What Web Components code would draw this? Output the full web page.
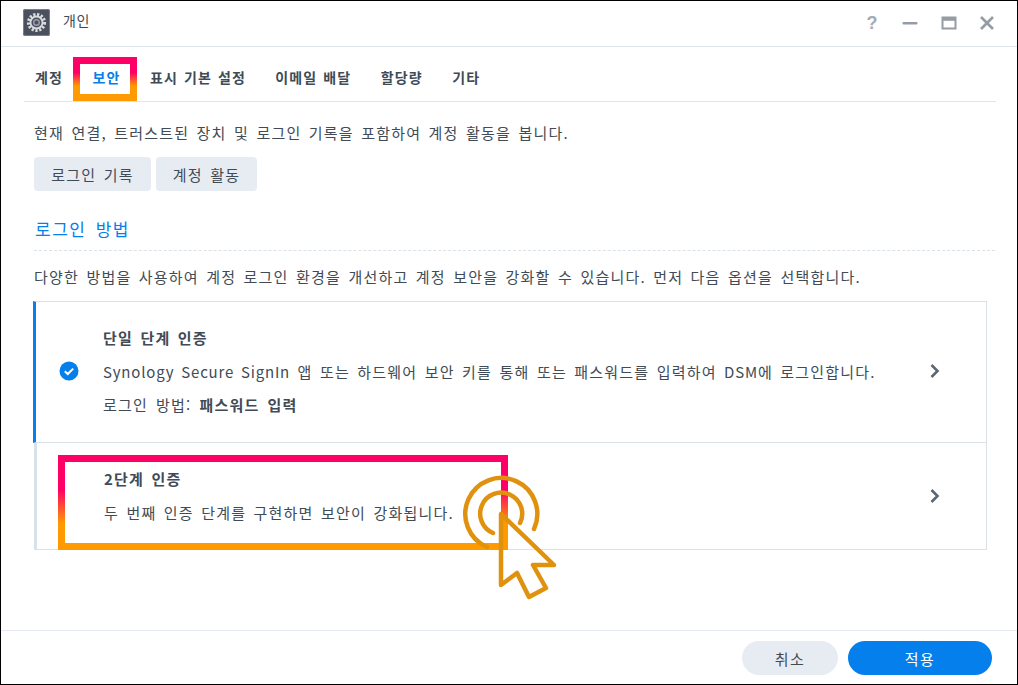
<!DOCTYPE html>
<html lang="ko"><head><meta charset="utf-8">
<style>
html,body{margin:0;padding:0;height:100%;background:#fff}
body{font-family:"Noto Sans CJK KR","Noto Sans",sans-serif;color:#414b55;font-size:15px}
</style></head><body>
<dsm-window>
  <dsm-titlebar slot="title">개인</dsm-titlebar>
  <dsm-tabs slot="tabs"></dsm-tabs>
  <dsm-security></dsm-security>
  <dsm-footer slot="footer"></dsm-footer>
</dsm-window>
<script>
function def(name, html){
  customElements.define(name, class extends HTMLElement{
    constructor(){super();this.attachShadow({mode:'open'}).innerHTML=html;}
  });
}
def('dsm-window',`<style>
:host{display:flex;flex-direction:column;box-sizing:border-box;width:1018px;height:685px;border:1px solid #000;background:#fff;position:relative;overflow:hidden}
.main{flex:1;min-height:0;display:flex;flex-direction:column}
</style><slot name="title"></slot><slot name="tabs"></slot><div class="main"><slot></slot></div><slot name="footer"></slot>`);

def('dsm-titlebar',`<style>
:host{display:flex;align-items:center;height:45px;border-bottom:1px solid #dfe5ec;padding:0 22px;box-sizing:content-box;flex:none}
.ic{width:27px;height:27px;margin-right:13px;flex:none;display:block;position:relative;top:-1px}
.t{font-size:14px;color:#414b55;flex:1;letter-spacing:.6px;position:relative;top:-4px}
.tools{display:flex;align-items:center;gap:18px;position:relative;top:-1px;right:-2px}
svg.b{width:20px;height:20px;display:block}
</style>
<svg class="ic" viewBox="0 0 27 27"><rect width="27" height="27" rx="2" fill="#4a505e"/><rect x=".5" y=".5" width="26" height="26" rx="2" fill="none" stroke="#7a7f8a"/>
<g fill="none" stroke="#d8dade"><circle cx="13.5" cy="13.5" r="8" stroke-width="3.2" stroke-dasharray="2.2 1.6"/><circle cx="13.5" cy="13.5" r="6" stroke-width="1.8"/><circle cx="13.5" cy="13.5" r="2.8" stroke-width="1.4" stroke="#9a9ea8"/></g></svg>
<span class="t"><slot></slot></span>
<div class="tools">
<span style="font:700 18px 'Liberation Sans',sans-serif;color:#a4aab1;width:16px;text-align:center;line-height:20px">?</span>
<svg class="b" viewBox="0 0 20 20" style="margin-left:2px"><rect x="2.500" y="9" width="15" height="2.600" rx="1" fill="#969ca4"/></svg>
<svg class="b" viewBox="0 0 20 20" style="margin-left:1px"><path d="M3.500 4.500h13v11h-13z" fill="none" stroke="#969ca4" stroke-width="2"/><rect x="3" y="4" width="14" height="3.800" fill="#969ca4"/></svg>
<svg class="b" viewBox="0 0 20 20"><path d="M4 4l12 12M16 4L4 16" fill="none" stroke="#969ca4" stroke-width="2.700"/></svg>
</div>`);

def('dsm-tabs',`<style>
:host{display:flex;gap:29.500px;margin:0 21px 0 23px;padding-left:11px;height:54px;border-bottom:1px solid #dfe5ec;align-items:center;flex:none;font-size:14px;font-weight:700;letter-spacing:1.100px;word-spacing:1px;color:#414b55;position:relative}
span{white-space:nowrap;position:relative;top:3px}
.on{color:#057feb}
</style>
<span>계정</span><span class="on">보안</span><span>표시 기본 설정</span><span>이메일 배달</span><span>할당량</span><span>기타</span>`);

def('dsm-button',`<style>
:host{display:inline-flex;align-items:center;justify-content:center;height:34px;background:#e7ecf3;border-radius:4px;font-size:15px;color:#414b55;letter-spacing:1.200px;word-spacing:2px;box-sizing:border-box;white-space:nowrap}
:host([pill]){border-radius:17px;letter-spacing:1.500px;padding-top:1px}
:host([primary]){background:#057feb;color:#fff}
</style><slot></slot>`);

def('dsm-card',`<style>
:host{display:flex;align-items:center;box-sizing:border-box;border:1px solid #d9e1e9;border-left:3px solid #d9e1e9;background:#fff;position:relative}
:host([active]){border-left-color:#057feb}
.c{flex:1;min-width:0;padding-left:var(--pad,67px)}
.chev{position:absolute;right:43px;top:50%;margin-top:var(--chev,-9px);width:16px;height:16px}
</style>
<slot name="check"></slot>
<div class="c"><slot></slot></div>
<svg class="chev" viewBox="0 0 16 16"><path d="M4.500 2l6 6-6 6" fill="none" stroke="#5d6772" stroke-width="2.600"/></svg>`);

def('dsm-hilite',`<style>
:host{display:block;position:absolute;box-sizing:border-box;border:7px solid;border-image:linear-gradient(#ff0066 0%,#ff0066 var(--a,35%),#ff9a00 var(--b,75%),#ff9a00 100%) 1;pointer-events:none;background:transparent}
</style>`);

def('dsm-security',`<style>
:host{display:block;padding:0 30px 0 33px;flex:1;font-size:15px;letter-spacing:1.200px;word-spacing:2px;color:#414b55}
p{margin:0;line-height:20px;white-space:nowrap}
.d1{padding-top:21px}
.btns{display:flex;gap:5px;margin-top:14px}
h2{margin:26px 0 0;font-weight:400;font-size:17px;color:#057feb;letter-spacing:1.500px;word-spacing:3px;line-height:24px;padding-bottom:9px;border-bottom:1px dashed #d9e1e9;margin-right:-8px;text-indent:1px}
.d2{margin-top:16px}
.cards{margin-top:14px;display:flex;flex-direction:column;margin-left:-1px;margin-right:0}
.t{font-weight:700;line-height:20px;color:#414b55;margin-bottom:1px}
.l{line-height:20px;white-space:nowrap;margin-top:14px}
.l2{margin-top:13px;word-spacing:2.600px}
.en{letter-spacing:.8px;word-spacing:2px}
b{font-weight:700}
.chk{position:absolute;left:23px;top:50%;margin-top:-11px}
.one{height:142px;padding-bottom:2px}.two{height:107px;border-top:0;margin-left:1px;--chev:-8px}
.one .t{margin-bottom:2px}
.two .t{margin-top:-1px}
</style>
<p class="d1">현재 연결, 트러스트된 장치 및 로그인 기록을 포함하여 계정 활동을 봅니다.</p>
<div class="btns"><dsm-button style="width:117px">로그인 기록</dsm-button><dsm-button style="width:101px">계정 활동</dsm-button></div>
<h2>로그인 방법</h2>
<p class="d2">다양한 방법을 사용하여 계정 로그인 환경을 개선하고 계정 보안을 강화할 수 있습니다. 먼저 다음 옵션을 선택합니다.</p>
<div class="cards">
<dsm-card class="one" active>
  <svg slot="check" class="chk" width="20" height="20" viewBox="0 0 20 20"><circle cx="10" cy="10" r="9.500" fill="#057feb"/><path d="M5.800 10.200l3 2.800 5.400-5.400" fill="none" stroke="#fff" stroke-width="2"/></svg>
  <div class="t">단일 단계 인증</div>
  <div class="l"><span class="en">Synology Secure SignIn</span> 앱 또는 하드웨어 보안 키를 통해 또는 패스워드를 입력하여 <span class="en">DSM</span>에 로그인합니다.</div>
  <div class="l l2">로그인 방법: <b>패스워드 입력</b></div>
</dsm-card>
<dsm-card class="two">
  <div class="t">2단계 인증</div>
  <div class="l">두 번째 인증 단계를 구현하면 보안이 강화됩니다.</div>
</dsm-card>
</div>
<dsm-hilite style="left:72px;top:56px;width:64px;height:44px;--a:30%;--b:72%"></dsm-hilite>
<dsm-hilite style="left:57px;top:454px;width:450px;height:95px"></dsm-hilite>
<svg style="position:absolute;left:459px;top:469px" width="100" height="132" viewBox="0 0 100 132" fill="none" stroke="#e0920f" stroke-width="4.500" stroke-linecap="round" stroke-linejoin="round">
<path d="M27 77A36 36 0 1 1 74 59"/>
<path d="M33 63A21 21 0 1 1 60 53"/>
<path d="M41 44L41 115L57 103L69 127L86 118L73 95L94 95Z"/>
</svg>
`);

def('dsm-footer',`<style>
:host{display:flex;justify-content:flex-end;gap:10px;align-items:center;height:53px;border-top:1px solid #e5eaf0;padding:0 25px 0 0;flex:none;box-sizing:content-box}
</style><dsm-button pill style="width:96px">취소</dsm-button><dsm-button pill primary style="width:144px">적용</dsm-button>`);
</script>
</body></html>
